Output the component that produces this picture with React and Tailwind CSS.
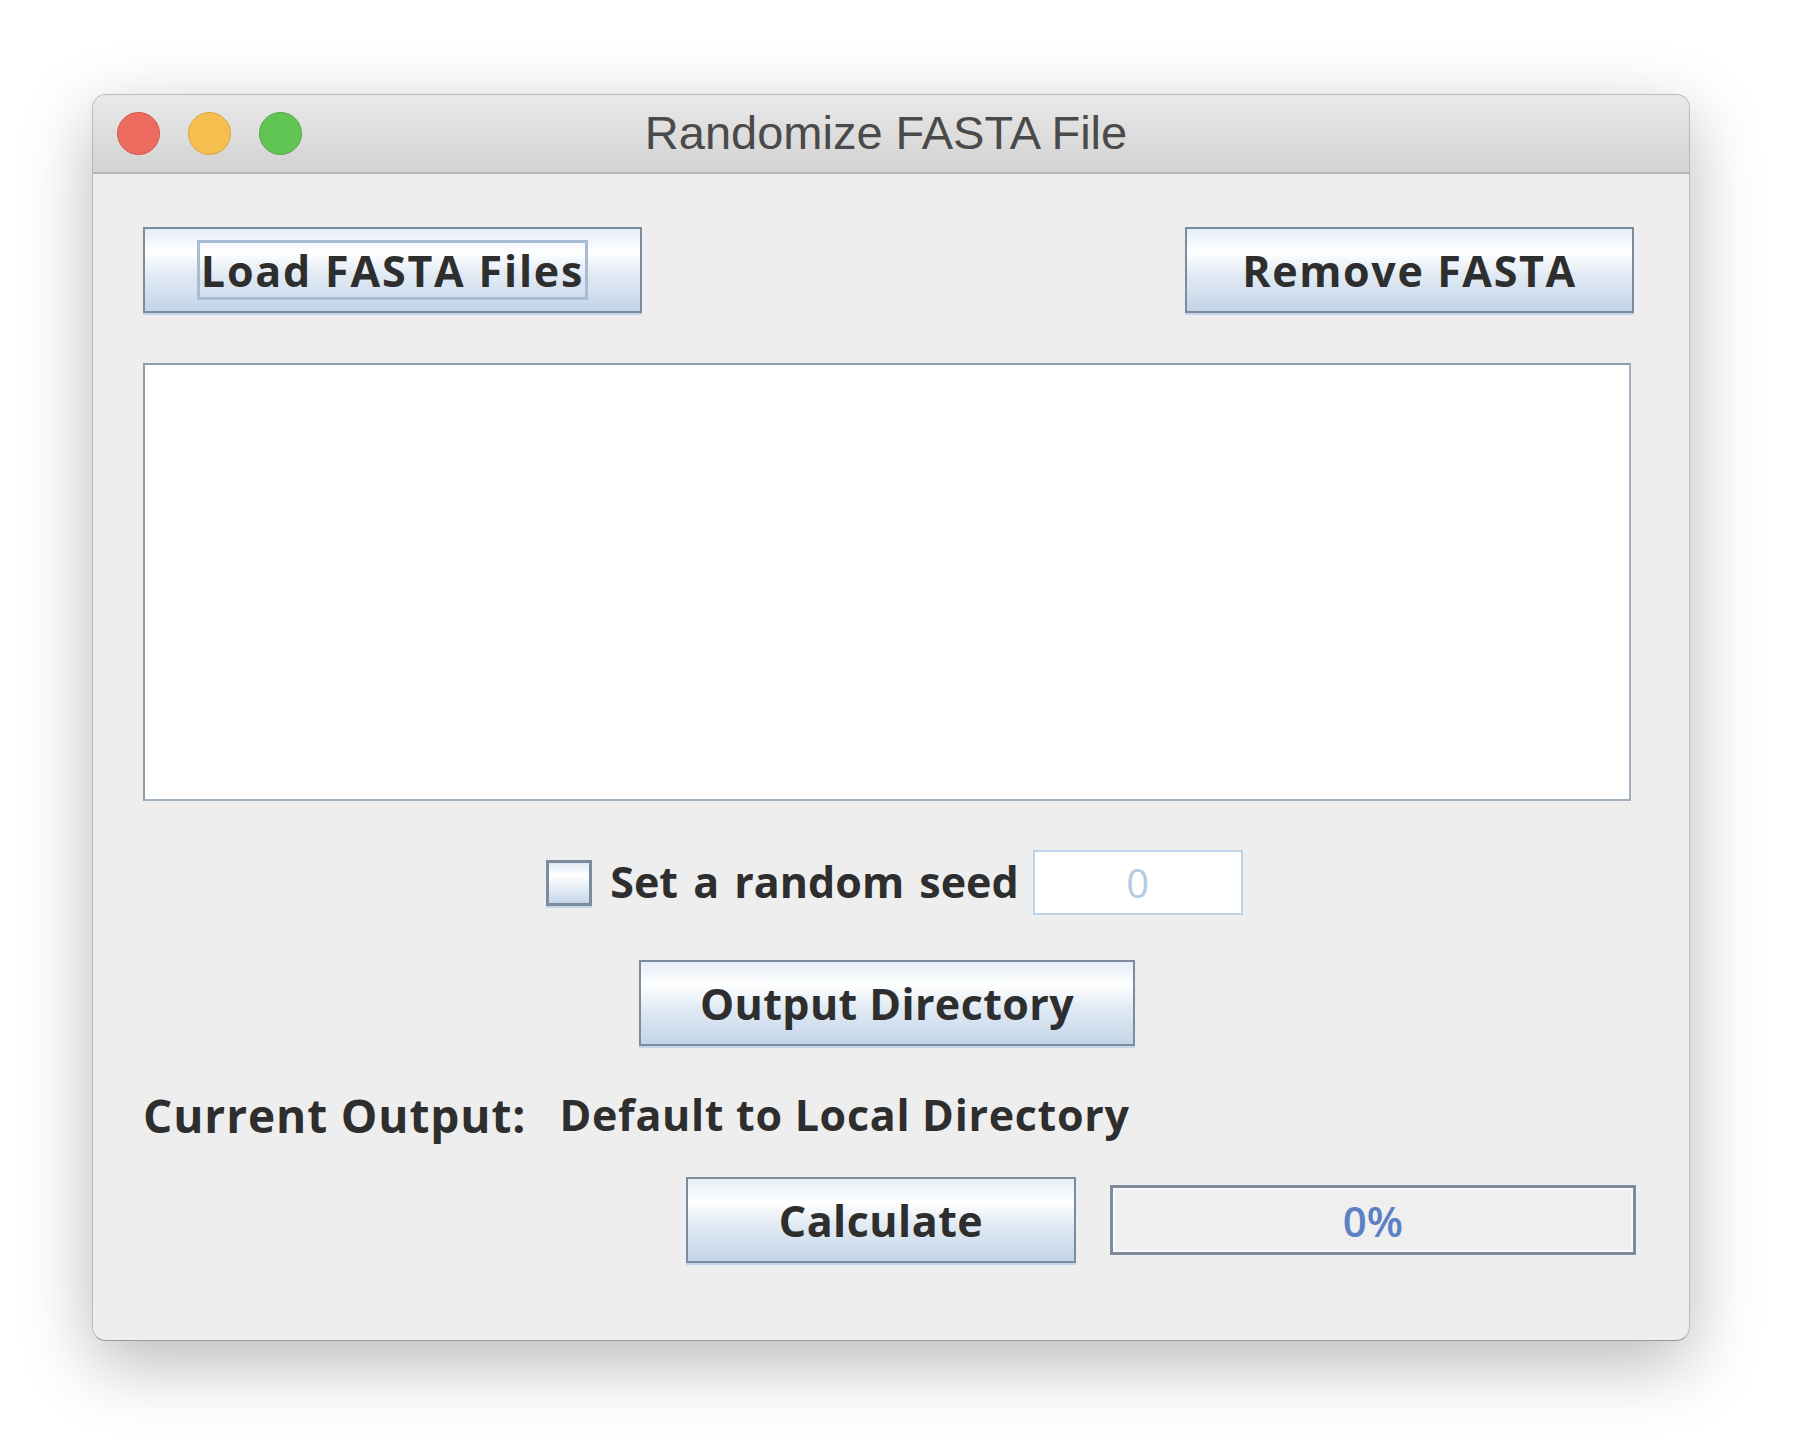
import React from "react";

const btnBase =
  "flex items-center justify-center border-2 border-[#7d8c9c] bg-[linear-gradient(to_bottom,#e4edf6_0%,#ffffff_28%,#e2ebf4_55%,#c3d5e8_100%)] shadow-[0_2px_0_#c4d6ea] text-[#2e2e2e] font-bold text-[43px] leading-none shrink-0";

export default function App() {
  const body = { fontFamily: '"Open Sans", "Noto Sans", sans-serif' };
  return (
    <div className="w-[1800px] h-[1452px] bg-white pl-[92px] pt-[94px]">
      <div className="w-[1598px] h-[1247px] rounded-[14px] overflow-hidden border border-[#b9b9b9] border-b-[#9a9a9a] shadow-[0_22px_70px_rgba(0,0,0,0.28)] flex flex-col bg-[#eeeeee]">
        {/* Title bar */}
        <div className="relative h-[79px] shrink-0 bg-[linear-gradient(to_bottom,#e9e9e9,#d2d2d2)] border-b-2 border-[#b4b4b4] flex items-center">
          <div className="flex items-center gap-[28px] pl-[24px]">
            <div className="w-[43px] h-[43px] rounded-full bg-[#ed6a5e] border border-[#d4574a]" />
            <div className="w-[43px] h-[43px] rounded-full bg-[#f5bf4f] border border-[#d9a445]" />
            <div className="w-[43px] h-[43px] rounded-full bg-[#61c554] border border-[#52a843]" />
          </div>
          <div
            className="absolute inset-0 pr-[10px] flex items-center justify-center text-[47px] text-[#4a4a4a] pointer-events-none"
            style={{ fontFamily: '"Liberation Sans", Arial, sans-serif' }}
          >
            Randomize FASTA File
          </div>
        </div>

        {/* Body */}
        <div className="flex-1 flex flex-col pl-[50px] pr-[55px] pt-[53px]" style={body}>
          <div className="flex justify-between h-[87px]">
            <button className={`${btnBase} w-[499px] h-[86px]`}>
              <span className="border-[3px] border-[#a8bdd4] px-[1px] h-[60px] flex items-center tracking-[1.8px]">
                Load FASTA Files
              </span>
            </button>
            <button className={`${btnBase} w-[449px] h-[86px] tracking-[1.6px]`}>Remove FASTA</button>
          </div>

          <div className="mt-[49px] w-[1488px] h-[438px] bg-white border-2 border-[#8d9cac] border-r-[#a3b0bd] border-b-[#a3b0bd]" />

          <div className="mt-[49px] flex items-center justify-center pl-[12px]">
            <div className="w-[46px] h-[46px] shrink-0 border-[3px] border-[#7d8c9c] bg-[linear-gradient(to_bottom,#dfe9f3,#ffffff_30%,#c6d7e9)] shadow-[0_2px_0_#c4d6ea]" />
            <span className="ml-[18px] text-[43px] font-bold text-[#2e2e2e] [word-spacing:4px]">
              Set a random seed
            </span>
            <div className="ml-[14px] w-[210px] h-[65px] shrink-0 bg-white border-2 border-[#bcd2e8] flex items-center justify-center text-[40px] text-[#b3cbe3]">
              0
            </div>
          </div>

          <div className="mt-[45px] flex justify-center pr-[3px]">
            <button className={`${btnBase} w-[496px] h-[86px] tracking-[0.4px]`}>Output Directory</button>
          </div>

          <div className="mt-[42px] flex items-center h-[54px] font-bold text-[#2e2e2e]">
            <span className="text-[46px] tracking-[0.9px]">Current Output:</span>
            <span className="ml-[33px] text-[43px] tracking-[0.7px]">Default to Local Directory</span>
          </div>

          <div className="mt-[35px] flex items-center">
            <div className="ml-[543px] shrink-0">
              <button className={`${btnBase} w-[390px] h-[86px] tracking-[0.5px]`}>Calculate</button>
            </div>
            <div className="ml-[34px] w-[526px] h-[70px] shrink-0 border-[3px] border-[#7d8c9c] bg-[#efefef] flex items-center justify-center">
              <div className="w-full h-full border-2 border-[#f9f9f9] flex items-center justify-center text-[42px] font-semibold text-[#5b80c4]">
                0%
              </div>
            </div>
          </div>
        </div>
      </div>
    </div>
  );
}
